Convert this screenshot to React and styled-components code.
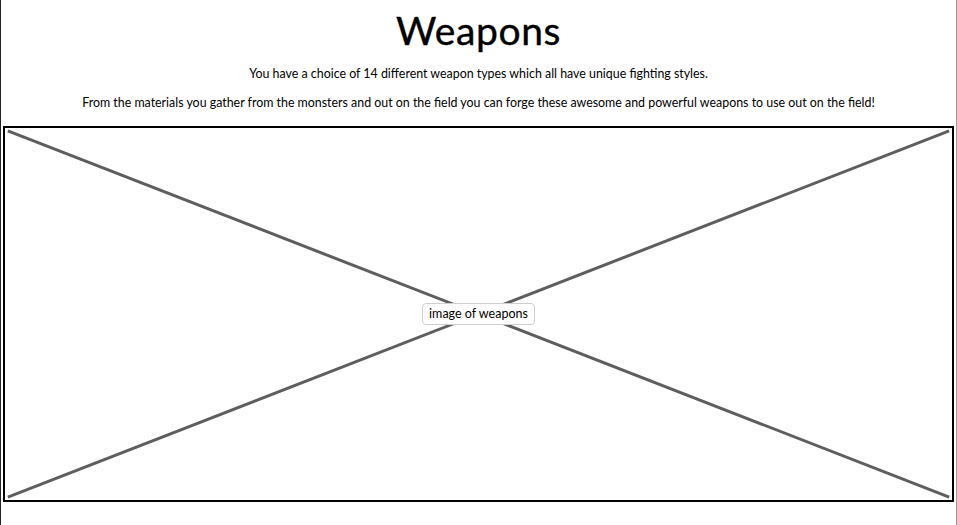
import React from "react";
import styled, { createGlobalStyle } from "styled-components";

const GlobalStyle = createGlobalStyle`
  body {
    margin: 0;
    background: #ffffff;
    font-family: "Lato", "Open Sans", sans-serif;
    color: #000000;
  }
`;

export default function App() {
  return (
    <>
      <GlobalStyle />
      <Page>
        <Title>Weapons</Title>
        <Text>You have a choice of 14 different weapon types which all have unique fighting styles.</Text>
        <Text>
          From the materials you gather from the monsters and out on the field you can forge these awesome and
          powerful weapons to use out on the field!
        </Text>
        <ImageBox>
          <Cross viewBox="0 0 100 100" preserveAspectRatio="none">
            <line x1="0.3" y1="0.8" x2="99.7" y2="99.2" />
            <line x1="0.3" y1="99.2" x2="99.7" y2="0.8" />
          </Cross>
          <Label>image of weapons</Label>
        </ImageBox>
      </Page>
    </>
  );
}

const Page = styled.div`
  box-sizing: border-box;
  width: 957px;
  min-height: 525px;
  border-left: 1px solid #222222;
  border-right: 1px solid #9a9a9a;
  display: flex;
  flex-direction: column;
  align-items: center;
  padding: 8px 2px 0 2px;
`;

const Title = styled.h1`
  margin: 0 0 14px 0;
  font-size: 39px;
  font-weight: 400;
  line-height: 44px;
  letter-spacing: 0.6px;
  -webkit-text-stroke: 0.4px #000000;
`;

const Text = styled.p`
  margin: 0 0 14px 0;
  font-size: 12.4px;
  line-height: 15px;
`;

const ImageBox = styled.div`
  position: relative;
  box-sizing: border-box;
  align-self: stretch;
  height: 376px;
  margin-top: 2px;
  border: 2px solid #000000;
  display: flex;
  align-items: center;
  justify-content: center;
`;

const Cross = styled.svg`
  position: absolute;
  inset: 0;
  width: 100%;
  height: 100%;

  line {
    stroke: #5e5e5e;
    stroke-width: 3px;
    vector-effect: non-scaling-stroke;
  }
`;

const Label = styled.span`
  position: relative;
  background: #ffffff;
  border: 1px solid #cfcfcf;
  border-radius: 4px;
  padding: 3px 6px;
  font-size: 12.5px;
  line-height: 14px;
`;
